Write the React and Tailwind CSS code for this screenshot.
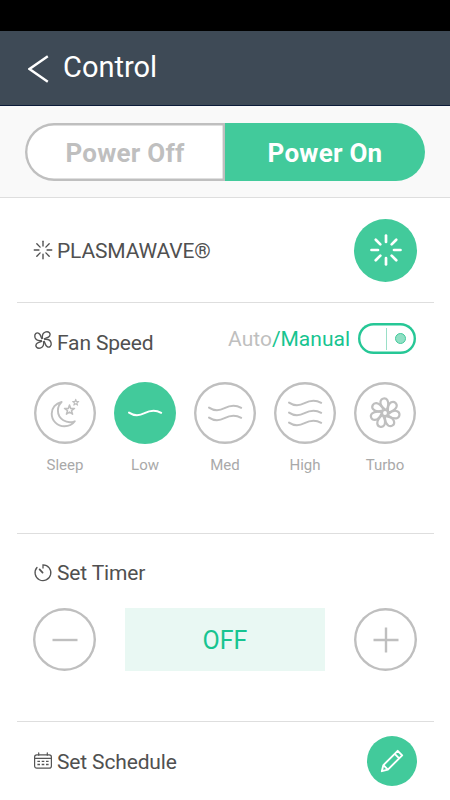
const GREY = '#bfbfbf';

function PlasmaIcon({ size, inner, outer, strokeWidth }) {
  return (
    <svg width={size} height={size} viewBox="-16 -16 32 32" stroke="currentColor" strokeWidth={strokeWidth} strokeLinecap="round">
      {[0, 45, 90, 135, 180, 225, 270, 315].map(a => (
        <line key={a} x1="0" y1={-inner} x2="0" y2={-outer} transform={`rotate(${a})`} />
      ))}
    </svg>
  );
}

function FanIcon() {
  return (
    <svg className="-mt-1.5" width="20" height="20" viewBox="-10 -10 20 20" fill="none" stroke="#555" strokeWidth="1.4" strokeLinejoin="round">
      {[0, 90, 180, 270].map(a => (
        <path key={a} d="M-0.6 -1.2C-1 -4.2 0 -7.4 2.8 -8.1C6 -8.8 8 -6.4 6.7 -4.2C5.4 -2 3 -2.4 0.9 -0.9" transform={`rotate(${a})`} />
      ))}
    </svg>
  );
}

function TimerIcon() {
  return (
    <svg className="-mt-px" width="20" height="20" viewBox="0 0 20 20" fill="none" stroke="#555" strokeWidth="1.3" strokeLinecap="round">
      <path d="M10 5V1.8A7.9 7.9 0 1 1 4 4.5" />
      <path d="M6.6 6.4L9.6 9.6" strokeWidth="1.7" />
    </svg>
  );
}

function CalendarIcon() {
  return (
    <svg className="-mt-0.5" width="20" height="20" viewBox="0 0 20 20" fill="none" stroke="#555" strokeWidth="1.2" strokeLinecap="round">
      <rect x="1.6" y="3.8" width="16.8" height="13.4" rx="2.2" />
      <path d="M1.6 7.4H18.4M5.7 1.8V4.2M14.3 1.8V4.2" />
      <path d="M4.4 10.4H7M8.7 10.4H11.3M13 10.4H15.6M4.4 13.5H7M8.7 13.5H11.3M13 13.5H15.6" strokeLinecap="butt" strokeWidth="1.4" />
    </svg>
  );
}

function MoonIcon() {
  return (
    <svg width="62" height="62" viewBox="0 0 62 62" fill="none" stroke={GREY} strokeWidth="1.9" strokeLinejoin="round">
      <path d="M27.6 20C21.6 21.3 17.7 26 17.7 31.7C17.7 38.8 23.4 44.3 30.4 44.3C35 44.3 38.6 42.4 40.8 39.3C37.4 40.5 33 40.6 29.3 38.3C25.7 36 23.9 32.4 23.9 28.6C23.9 25.2 25.2 22.2 27.6 20Z" />
      <path strokeWidth="1.5" d="M35.5 22.9L36.7 26.4H40.5L37.5 28.7L38.6 32.2L35.5 30.1L32.4 32.2L33.5 28.7L30.5 26.4H34.3Z" />
      <path strokeWidth="1.2" d="M41.7 17.4L42.4 19.5H44.7L42.9 20.9L43.5 23.1L41.7 21.8L39.9 23.1L40.5 20.9L38.7 19.5H41Z" />
    </svg>
  );
}

function WaveIcon({ lines, color = GREY }) {
  return (
    <svg width="62" height="62" viewBox="0 0 62 62" fill="none" stroke={color} strokeWidth="2" strokeLinecap="round">
      {lines.map(y => (
        <path key={y} d="M15 -0.4C20 3 25 3 30.5 0.2C36 -2.8 42 -3.2 47.2 -0.2" transform={`translate(0 ${y})`} />
      ))}
    </svg>
  );
}

function TurboIcon() {
  return (
    <svg width="62" height="62" viewBox="-31 -31 62 62" fill="none" stroke={GREY} strokeWidth="2.2" strokeLinejoin="round">
      {[0, 1, 2, 3, 4, 5, 6].map(i => (
        <path
          key={i}
          d="M0.4 -3.4C-2.6 -5.5 -5 -8.6 -4.5 -11.5C-3.8 -15 0.6 -15.6 2.4 -12.8C3.9 -10.2 3.2 -6.5 1.8 -3.2"
          transform={`rotate(${(i * 360) / 7})`}
        />
      ))}
      <circle r="3" />
    </svg>
  );
}

function SpeedButton({ label, active, children }) {
  return (
    <div className="flex w-[62px] flex-col items-center">
      <div className={`flex size-[62px] items-center justify-center rounded-full ${active ? 'bg-[#42ca9b]' : 'shadow-[inset_0_0_0_2.4px_#bfbfbf]'}`}>
        {children}
      </div>
      <span className="mt-3 text-[15px] leading-[18px] text-[#a9a9a9]">{label}</span>
    </div>
  );
}

function Title({ icon, children }) {
  return (
    <h2 className="flex items-center gap-1 text-[21px] leading-6 tracking-[-0.15px] text-[#505050]">
      {icon}
      <span>{children}</span>
    </h2>
  );
}

function RoundButton({ path }) {
  return (
    <button className="flex size-[63px] items-center justify-center rounded-full shadow-[inset_0_0_0_2.4px_#bfbfbf]">
      <svg width="26" height="26" stroke={GREY} strokeWidth="2.4">
        <path d={path} />
      </svg>
    </button>
  );
}

const speeds = [
  { label: 'Sleep', icon: <MoonIcon /> },
  { label: 'Low', active: true, icon: <WaveIcon lines={[31]} color="#fff" /> },
  { label: 'Med', icon: <WaveIcon lines={[26, 36]} /> },
  { label: 'High', icon: <WaveIcon lines={[21, 31, 41]} /> },
  { label: 'Turbo', icon: <TurboIcon /> },
];

export default function App() {
  return (
    <div className="flex h-[800px] w-[450px] flex-col overflow-hidden bg-white font-['Roboto',sans-serif]">
      {/* Status bar */}
      <div className="h-[31px] shrink-0 bg-black" />

      {/* Header */}
      <header className="flex h-[75px] shrink-0 items-center border-b border-[#0b1b38] bg-[#3e4a56] pl-7 text-white">
        <svg className="mt-px" width="21" height="28" viewBox="0 0 21 28" fill="none" stroke="#fff" strokeWidth="2.4">
          <path d="M19.8 1.3L1.5 14L19.8 26.7" />
        </svg>
        <h1 className="mb-0.5 ml-3.5 text-[29px] leading-[34px]">Control</h1>
      </header>

      {/* Power switch */}
      <div className="h-[92px] shrink-0 border-b border-[#dedede] bg-[#f9f9f9] px-[25px] pt-[17px]">
        <div className="flex h-[58px] text-[26px] font-bold tracking-[0.25px]">
          <button className="flex w-[200px] items-center justify-center rounded-l-full bg-white pt-0.5 text-[#bfbfbf] shadow-[inset_0_0_0_2.4px_#bfbfbf]">
            Power Off
          </button>
          <button className="flex w-[200px] items-center justify-center rounded-r-full bg-[#42ca9b] pt-0.5 text-white">
            Power On
          </button>
        </div>
      </div>

      <main className="mr-4 ml-[17px]">
        <section className="flex h-[105px] items-center justify-between border-b border-[#dedede] pr-[17px] pl-4 text-[#505050]">
          <div className="mt-0.5 [&_svg]:-mt-0.5">
            <Title icon={<PlasmaIcon size={20} inner={6.5} outer={14} strokeWidth={2.2} />}>PLASMAWAVE®</Title>
          </div>
          <div className="flex size-[63px] items-center justify-center rounded-full bg-[#42ca9b] text-white">
            <PlasmaIcon size={32} inner={8} outer={14.5} strokeWidth={2.7} />
          </div>
        </section>

        <section className="h-[231px] border-b border-[#dedede] pr-[17px] pl-4">
          <div className="flex h-[79px] items-center justify-between">
            <Title icon={<FanIcon />}>Fan Speed</Title>
            <div className="mb-2 flex items-center">
              <span className="text-[21px] leading-6 text-[#bfbfbf]">
                Auto<span className="text-[#17c490]">/Manual</span>
              </span>
              <div className="mr-px ml-2 flex h-[31px] w-[58px] items-center justify-end rounded-full pr-[10px] shadow-[inset_0_0_0_2.4px_#26c796]">
                <div className="h-[22px] w-px bg-[#9adfc7]" />
                <div className="ml-2 size-[11px] rounded-full border border-[#42ca9b] bg-[#90dfc4]" />
              </div>
            </div>
          </div>
          <div className="flex justify-between pr-px pl-px">
            {speeds.map(s => (
              <SpeedButton key={s.label} label={s.label} active={s.active}>
                {s.icon}
              </SpeedButton>
            ))}
          </div>
        </section>

        <section className="h-[188px] border-b border-[#dedede] pr-[17px] pl-4 pt-[27px]">
          <Title icon={<TimerIcon />}>Set Timer</Title>
          <div className="mt-[23px] flex justify-between">
            <RoundButton path="M0.5 13H25.5" />
            <div className="flex h-[63px] w-[200px] items-center justify-center bg-[#e9f8f3] pt-0.5 text-[25px] text-[#17c490]">OFF</div>
            <RoundButton path="M0.5 13H25.5M13 0.5V25.5" />
          </div>
        </section>

        <section className="flex h-[78px] items-center justify-between pr-[17px] pl-4">
          <div className="mt-0.5">
            <Title icon={<CalendarIcon />}>Set Schedule</Title>
          </div>
          <div className="flex size-[50px] items-center justify-center rounded-full bg-[#42ca9b]">
            <svg width="24" height="24" viewBox="0 0 24 24" fill="none" stroke="#fff" strokeWidth="1.9" strokeLinejoin="round">
              <path d="M1.8 22.2L3.4 16.1L17.7 1.8L22.2 6.3L7.9 20.6Z" />
              <path d="M3.4 16.1L7.9 20.6M14.7 4.8L19.2 9.3" />
            </svg>
          </div>
        </section>
      </main>
    </div>
  );
}
